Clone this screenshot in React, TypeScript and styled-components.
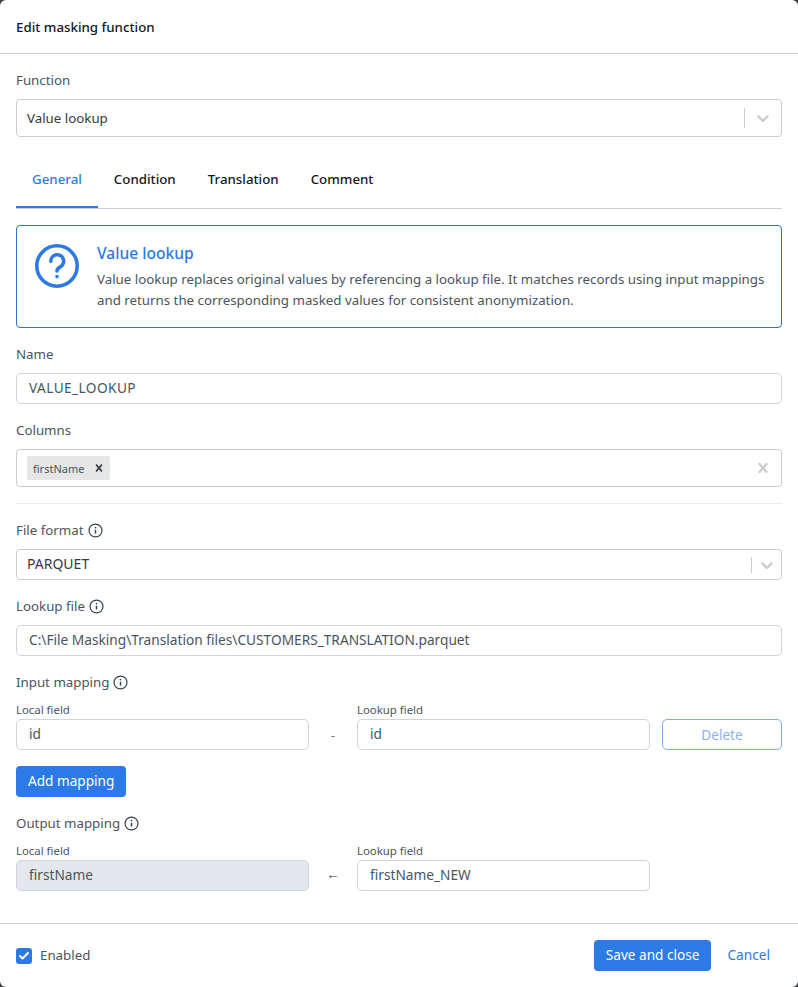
import React from "react";
import styled, { createGlobalStyle } from "styled-components";
import { Check } from "lucide-react";

const GlobalStyle = createGlobalStyle`
  html, body {
    margin: 0;
    padding: 0;
    background: #3a3d40;
  }
  * {
    box-sizing: border-box;
  }
`;

const Modal = styled.div`
  width: 798px;
  height: 987px;
  display: flex;
  flex-direction: column;
  background: #fff;
  border-radius: 6px;
  overflow: hidden;
  font-family: "Noto Sans", "Open Sans", sans-serif;
  font-size: 13.3px;
  color: #4a5560;
`;

const Header = styled.div`
  height: 54px;
  padding: 0 16px;
  display: flex;
  align-items: center;
  border-bottom: 1px solid #c9d2dc;
  font-weight: 500;
  color: #14181d;
`;

const Body = styled.div`
  flex: 1;
  padding: 16px 16px 0;
`;

const Label = styled.div<{ $tight?: boolean }>`
  height: 20px;
  display: flex;
  align-items: center;
  gap: 4px;
  margin-bottom: ${({ $tight }) => ($tight ? 11 : 9)}px;
  color: #4a5560;
  line-height: 20px;
`;

const SmallLabel = styled.div`
  font-size: 11.4px;
  line-height: 14px;
  height: 14px;
  margin-bottom: 2px;
  color: #4a5560;
`;

const Field = styled.div`
  margin-bottom: 16px;
`;

const Select = styled.div<{ $h: number }>`
  height: ${({ $h }) => $h}px;
  display: flex;
  align-items: center;
  padding-left: 10px;
  background: #fff;
  border: 1px solid #cccccc;
  border-radius: 4px;
  color: #333b44;
`;

const SelectValue = styled.div<{ $caps?: boolean }>`
  flex: 1;
  font-size: ${({ $caps }) => ($caps ? "14px" : "inherit")};
  padding-bottom: ${({ $caps }) => ($caps ? "2px" : "0")};
`;

const Separator = styled.span<{ $h: number }>`
  width: 1px;
  height: ${({ $h }) => $h}px;
  background: #cccccc;
`;

const IconSlot = styled.span<{ $w?: number }>`
  width: ${({ $w }) => $w ?? 36}px;
  display: flex;
  justify-content: center;
  align-items: center;
  color: #cccccc;
`;

const Input = styled.input<{ $disabled?: boolean; $caps?: boolean }>`
  display: block;
  width: 100%;
  height: 31px;
  padding: 0 12px 2px;
  font: inherit;
  font-size: 13.7px;
  letter-spacing: ${({ $caps }) => ($caps ? "0.4px" : "0")};
  color: #4a5560;
  background: ${({ $disabled }) => ($disabled ? "#e4e8ec" : "#fff")};
  border: 1px solid #ced4da;
  border-radius: 5px;
  outline: none;
`;

const Tabs = styled.div`
  height: 57px;
  margin-top: 15px;
  margin-bottom: 16px;
  display: flex;
  border-bottom: 1px solid #c9d2dc;
`;

const Tab = styled.div<{ $active?: boolean }>`
  height: 56px;
  padding: 0 16px;
  display: flex;
  align-items: center;
  font-weight: 500;
  color: ${({ $active }) => ($active ? "#2c7be5" : "#14181d")};
  border-bottom: 2px solid ${({ $active }) => ($active ? "#2c7be5" : "transparent")};
`;

const InfoBox = styled.div`
  height: 103px;
  display: flex;
  align-items: flex-start;
  padding: 16px 17px;
  border: 1px solid #2c74cf;
  border-radius: 4px;
  margin-bottom: 16px;
`;

const InfoIcon = styled.div`
  width: 46px;
  height: 46px;
  margin: 1px 17px 0 0;
  color: #2c7be5;
  flex: none;
`;

const InfoTitle = styled.div`
  font-size: 15.6px;
  line-height: 22px;
  font-weight: 500;
  color: #2c7be5;
  margin-bottom: 5px;
`;

const InfoText = styled.div`
  line-height: 21px;
  color: #4a5560;
  white-space: nowrap;
`;

const ChipRow = styled.div`
  display: flex;
`;

const Chip = styled.div`
  height: 24px;
  display: flex;
  align-items: center;
  gap: 8px;
  padding: 0 4px 0 6px;
  background: #e6e6e6;
  border-radius: 2px;
  font-size: 11px;
  color: #4a5560;
`;

const ChipClose = styled.span`
  display: flex;
  color: #333b44;
`;

const Divider = styled.div`
  height: 1px;
  background: #e8ebee;
  margin-bottom: 16px;
`;

const MappingRow = styled.div`
  display: grid;
  grid-template-columns: 293px 48px 293px 120px;
  align-items: end;
`;

const Between = styled.div<{ $arrow?: boolean }>`
  height: 31px;
  padding-bottom: ${({ $arrow }) => ($arrow ? "4px" : "0")};
  display: flex;
  align-items: center;
  justify-content: center;
  color: ${({ $arrow }) => ($arrow ? "#333b44" : "#6c757d")};
`;

const OutlineButton = styled.button`
  height: 31px;
  width: 120px;
  margin-left: 12px;
  padding-bottom: 2px;
  font: inherit;
  font-size: 13.6px;
  color: #8ab4ef;
  background: #fff;
  border: 1px solid #7eaeee;
  border-radius: 5px;
`;

const PrimaryButton = styled.button`
  height: 31px;
  padding: 0 12px 2px;
  font: inherit;
  font-size: 13.6px;
  color: #fff;
  background: #2c7be5;
  border: none;
  border-radius: 4px;
`;

const Footer = styled.div`
  height: 64px;
  padding: 0 12px 0 16px;
  display: flex;
  align-items: center;
  border-top: 1px solid #c9d2dc;
`;

const CheckBox = styled.span`
  width: 16px;
  height: 16px;
  margin-right: 8px;
  display: flex;
  align-items: center;
  justify-content: center;
  background: #2c7be5;
  border-radius: 3px;
  color: #fff;
`;

const EnabledText = styled.span`
  padding-bottom: 2px;
`;

const Spacer = styled.div`
  flex: 1;
`;

const LinkButton = styled.button`
  height: 31px;
  padding: 0 16px 2px;
  font: inherit;
  font-size: 13.7px;
  color: #2c7be5;
  background: none;
  border: none;
`;

const Chevron = () => (
  <svg width="20" height="20" viewBox="0 0 20 20" fill="currentColor">
    <path d="M4.516 7.548c.436-.446 1.043-.481 1.576 0L10 11.295l3.908-3.747c.533-.481 1.141-.446 1.574 0 .436.445.408 1.197 0 1.615-.406.418-4.695 4.502-4.695 4.502a1.095 1.095 0 0 1-1.576 0S4.924 9.581 4.516 9.163c-.409-.418-.436-1.17 0-1.615z" />
  </svg>
);

const Cross = ({ size }: { size: number }) => (
  <svg width={size} height={size} viewBox="0 0 20 20" fill="currentColor">
    <path d="M14.348 14.849c-.469.469-1.229.469-1.697 0L10 11.819l-2.651 3.029c-.469.469-1.229.469-1.697 0-.469-.469-.469-1.229 0-1.697l2.758-3.15-2.759-3.152c-.469-.469-.469-1.228 0-1.697s1.228-.469 1.697 0L10 8.183l2.651-3.031c.469-.469 1.228-.469 1.697 0s.469 1.229 0 1.697l-2.758 3.152 2.758 3.15c.469.469.469 1.229 0 1.698z" />
  </svg>
);

const InfoDot = () => (
  <svg width="15" height="15" viewBox="0 0 16 16" fill="none" stroke="#39424c" strokeWidth="1.3">
    <circle cx="8" cy="8" r="6.9" />
    <path d="M8 7.2v4" strokeWidth="1.6" />
    <circle cx="8" cy="4.9" r="0.9" fill="#39424c" stroke="none" />
  </svg>
);

const QuestionIcon = () => (
  <svg width="46" height="46" viewBox="0 0 46 46" fill="none" stroke="currentColor" strokeWidth="3.6" strokeLinecap="round">
    <circle cx="23" cy="23" r="20.2" />
    <path d="M16.8 18.2a6.4 6.4 0 1 1 9.4 5.6c-2 1.1-3.2 2.3-3.2 4.2" />
    <circle cx="23" cy="33.6" r="1.1" fill="currentColor" strokeWidth="1.4" />
  </svg>
);

export default function App() {
  return (
    <>
      <GlobalStyle />
      <Modal>
        <Header>Edit masking function</Header>
        <Body>
          <Label>Function</Label>
          <Select $h={38}>
            <SelectValue>Value lookup</SelectValue>
            <Separator $h={20} />
            <IconSlot>
              <Chevron />
            </IconSlot>
          </Select>

          <Tabs>
            <Tab $active>General</Tab>
            <Tab>Condition</Tab>
            <Tab>Translation</Tab>
            <Tab>Comment</Tab>
          </Tabs>

          <InfoBox>
            <InfoIcon>
              <QuestionIcon />
            </InfoIcon>
            <div>
              <InfoTitle>Value lookup</InfoTitle>
              <InfoText>
                Value lookup replaces original values by referencing a lookup file. It matches records using input mappings
                <br />
                and returns the corresponding masked values for consistent anonymization.
              </InfoText>
            </div>
          </InfoBox>

          <Field>
            <Label>Name</Label>
            <Input $caps defaultValue="VALUE_LOOKUP" />
          </Field>

          <Field>
            <Label>Columns</Label>
            <Select $h={38}>
              <SelectValue>
                <ChipRow>
                  <Chip>
                    firstName
                    <ChipClose>
                      <Cross size={14} />
                    </ChipClose>
                  </Chip>
                </ChipRow>
              </SelectValue>
              <IconSlot>
                <Cross size={20} />
              </IconSlot>
            </Select>
          </Field>

          <Divider />

          <Field>
            <Label>
              File format <InfoDot />
            </Label>
            <Select $h={31}>
              <SelectValue $caps>PARQUET</SelectValue>
              <Separator $h={16} />
              <IconSlot $w={29}>
                <Chevron />
              </IconSlot>
            </Select>
          </Field>

          <Field>
            <Label>
              Lookup file <InfoDot />
            </Label>
            <Input defaultValue="C:\File Masking\Translation files\CUSTOMERS_TRANSLATION.parquet" />
          </Field>

          <Label $tight>
            Input mapping <InfoDot />
          </Label>
          <Field>
            <MappingRow>
              <div>
                <SmallLabel>Local field</SmallLabel>
                <Input defaultValue="id" />
              </div>
              <Between>-</Between>
              <div>
                <SmallLabel>Lookup field</SmallLabel>
                <Input defaultValue="id" />
              </div>
              <OutlineButton>Delete</OutlineButton>
            </MappingRow>
          </Field>

          <Field>
            <PrimaryButton>Add mapping</PrimaryButton>
          </Field>

          <Label $tight>
            Output mapping <InfoDot />
          </Label>
          <MappingRow>
            <div>
              <SmallLabel>Local field</SmallLabel>
              <Input $disabled readOnly defaultValue="firstName" />
            </div>
            <Between $arrow>←</Between>
            <div>
              <SmallLabel>Lookup field</SmallLabel>
              <Input defaultValue="firstName_NEW" />
            </div>
          </MappingRow>
        </Body>
        <Footer>
          <CheckBox>
            <Check size={12} strokeWidth={4} />
          </CheckBox>
          <EnabledText>Enabled</EnabledText>
          <Spacer />
          <PrimaryButton>Save and close</PrimaryButton>
          <LinkButton>Cancel</LinkButton>
        </Footer>
      </Modal>
    </>
  );
}
